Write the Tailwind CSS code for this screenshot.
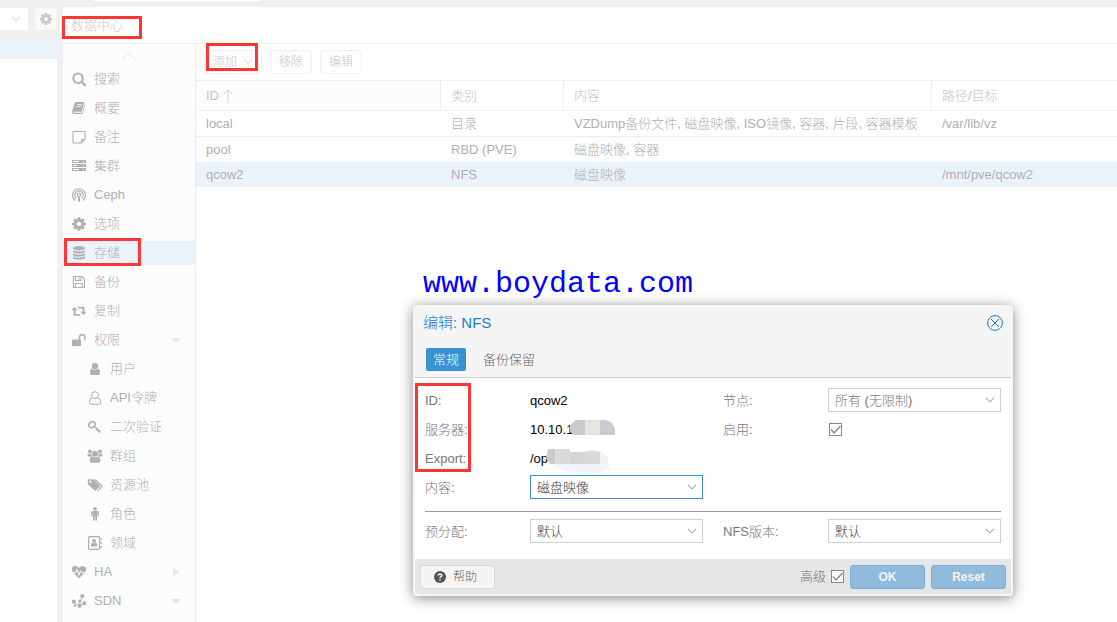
<!DOCTYPE html>
<html lang="zh-CN">
<head>
    <meta charset="UTF-8">
    <meta name="viewport" content="width=device-width, initial-scale=1.0">
    <title>数据中心 - 存储</title>
    <script src="https://cdn.jsdelivr.net/npm/@tailwindcss/browser@4"></script>
</head>
<body class="relative flex min-h-screen flex-col overflow-x-hidden bg-[#f0f0f0] font-['Liberation_Sans','Noto_Sans_CJK_SC',sans-serif] text-[13px] leading-5 font-light text-[#b0b0b0]">

    <!-- shared shapes -->
    <svg class="hidden">
        <symbol id="chevron" viewBox="0 0 10 6"><path d="M1 .8l4 4 4-4" fill="none" stroke="currentColor" stroke-width="1.1"/></symbol>
        <symbol id="cog" viewBox="0 0 1792 1792"><path fill="currentColor" d="M1152 896q0-106-75-181t-181-75-181 75-75 181 75 181 181 75 181-75 75-181zm512-109v222q0 12-8 23t-20 13l-185 28q-19 54-39 91 35 50 107 138 10 12 10 25t-9 23q-27 37-99 108t-94 71q-12 0-26-9l-138-108q-44 23-91 38-16 136-29 186-7 28-36 28h-222q-14 0-24.5-8.5t-11.5-21.5l-28-184q-49-16-90-37l-141 107q-10 9-25 9-14 0-25-11-126-114-165-168-7-10-7-23 0-12 8-23 15-21 51-66.5t54-70.5q-27-50-41-99l-183-27q-13-2-21-12.5t-8-23.5v-222q0-12 8-23t19-13l186-28q14-46 39-92-40-57-107-138-10-12-10-24 0-10 9-23 26-36 98.5-107.5t94.5-71.5q13 0 26 10l138 107q44-23 91-38 16-136 29-186 7-28 36-28h222q14 0 24.5 8.5t11.5 21.5l28 184q49 16 90 37l142-107q9-9 24-9 13 0 25 10 129 119 165 170 7 8 7 22 0 12-8 23-15 21-51 66.5t-54 70.5q26 50 41 98l183 28q13 2 21 12.5t8 23.5z"/></symbol>
    </svg>

    <div class="h-[7px] shrink-0 pl-[93px]"><div class="h-px w-[168px] bg-white"></div></div>

    <div class="flex grow">
        <!-- resource tree, mostly off to the left -->
        <aside class="flex w-[57px] shrink-0 flex-col">
            <div class="flex h-[30px] items-start justify-between pt-px">
                <button class="flex h-[22px] w-7 items-center justify-end bg-white pr-[7px] text-[#dddddd]" aria-label="视图">
                    <svg class="h-[6px] w-[10px]"><use href="#chevron"/></svg>
                </button>
                <button class="flex size-[22px] items-center justify-center rounded-sm bg-[#f9f9f9] text-[#c8c8c8]" aria-label="设置">
                    <svg class="size-[14px]"><use href="#cog"/></svg>
                </button>
            </div>
            <div class="h-[22px] bg-[#ebf3fa]"></div>
            <div class="grow bg-white"></div>
        </aside>

        <div class="ml-[6px] flex min-w-0 grow flex-col bg-white">
            <header class="relative flex h-[37px] items-center border-b border-[#eeeeee] pt-0.5 pl-2 text-[#cccccc]">
                <h1>数据中心</h1>
                <div class="absolute top-[9px] -left-px h-[23px] w-20 border-3 border-[#fc3535]"></div>
            </header>

            <div class="flex grow">
                <nav class="flex w-[133px] shrink-0 flex-col border-r border-[#eeeeee] bg-[#fcfcfc]">
                    <div class="flex h-[23px] justify-center pt-2 text-[#e8e8e8]">
                        <svg class="h-[9px] w-4" viewBox="0 0 16 9"><path d="M1 8l7-7 7 7" fill="none" stroke="currentColor"/></svg>
                    </div>
                    <ul class="flex flex-col gap-[5px]">
                        <li><a href="#" class="flex h-6 items-center gap-[7px] pl-2">
                            <svg class="size-4 shrink-0" viewBox="0 0 16 16" fill="none" stroke="currentColor"><circle cx="7" cy="7.3" r="4.7" stroke-width="2"/><path d="M10.7 11l3.2 3.2" stroke-width="2.4" stroke-linecap="round"/></svg>搜索</a></li>
                        <li><a href="#" class="flex h-6 items-center gap-[7px] pl-2">
                            <svg class="size-4 shrink-0" viewBox="0 0 16 16" fill="currentColor"><path d="M5.3 2h7.2q1 0 .7 1l-2.3 7.9q-.3.9-1.3.9H2.8q-.7 0-.6.5.2.5 1 .5h7.2q.7 0 1-.8L13.9 4q.7.5.4 1.3l-2.3 7.5q-.4 1.2-1.6 1.2H3q-1.5 0-2-1.5-.2-.7.1-1.3l2.5-7.8Q4 2 5.300 2z"/><path d="M6 4.600h5M5.400 6.600h5" stroke="#fcfcfc" stroke-width=".9"/></svg>概要</a></li>
                        <li><a href="#" class="flex h-6 items-center gap-[7px] pl-2">
                            <svg class="size-4 shrink-0" viewBox="0 0 16 16" fill="none" stroke="currentColor" stroke-width="1.1"><path d="M2 3q0-.5.5-.5h11q.5 0 .5.5v7.500l-3.500 3.500h-8q-.5 0-.5-.5zM10.500 14v-3q0-.5.5-.5h3"/></svg>备注</a></li>
                        <li><a href="#" class="flex h-6 items-center gap-[7px] pl-2">
                            <svg class="size-4 shrink-0" viewBox="0 0 16 16" fill="currentColor"><path d="M1 2h14v3H1zM1 6h14v3H1zM1 10h14v3H1z"/><path d="M2 3.500h6M2 7.500h4M2 11.500h6M12 3.500h1M12 7.500h1M12 11.500h1" stroke="#fcfcfc"/></svg>集群</a></li>
                        <li><a href="#" class="flex h-6 items-center gap-[7px] pl-2">
                            <svg class="size-4 shrink-0" viewBox="0 0 16 16" fill="none" stroke="currentColor" stroke-width="1.200"><path d="M4.200 13.500a6.500 6.500 0 1 1 7.600 0M5.300 11.300a4.200 4.200 0 1 1 5.400 0"/><circle cx="8" cy="7.800" r="1.700"/><path d="M8 10.200v4.300" stroke-width="2.200"/></svg>Ceph</a></li>
                        <li><a href="#" class="flex h-6 items-center gap-[7px] pl-2">
                            <svg class="size-4 shrink-0"><use href="#cog"/></svg>选项</a></li>
                        <li class="relative"><a href="#" class="flex h-6 items-center gap-[7px] bg-[#ebf3fa] pl-2">
                            <svg class="size-4 shrink-0" viewBox="0 0 16 16" fill="currentColor"><ellipse cx="8" cy="3.200" rx="6" ry="2.200"/><path d="M2 4.900q1.500 1.700 6 1.700t6-1.700v1.500q0 2-6 2t-6-2zM2 8q1.500 1.700 6 1.700T14 8v1.500q0 2-6 2t-6-2zM2 11.100q1.500 1.700 6 1.700t6-1.700v1.500q0 2-6 2t-6-2z"/></svg>存储</a>
                            <div class="absolute -top-[3px] left-px h-7 w-[77px] border-3 border-[#fc3535]"></div></li>
                        <li><a href="#" class="flex h-6 items-center gap-[7px] pl-2">
                            <svg class="size-4 shrink-0" viewBox="0 0 16 16" fill="none" stroke="currentColor" stroke-width="1.100"><path d="M2.500 2.500h8.500l2.500 2.500v8.500h-11zM4.500 13.500v-4h7v4M4.500 2.500v4h5.500v-4M8 3.500v2"/></svg>备份</a></li>
                        <li><a href="#" class="flex h-6 items-center gap-[7px] pl-2">
                            <svg class="size-4 shrink-0" viewBox="0 0 16 16" fill="currentColor"><path d="M3.500 3.800L.6 7.300h2v5q0 .5.500.5h6.800l-1.500-1.900H4.500V7.300h2zM12.500 12.200l2.900-3.500h-2v-4.500q0-.5-.5-.5H6.100l1.500 1.900h3.900v3.100h-2z"/></svg>复制</a></li>
                        <li><a href="#" class="flex h-6 items-center gap-[7px] pl-2">
                            <svg class="size-4 shrink-0" viewBox="0 0 16 16"><rect x="1" y="7.500" width="9" height="6.500" rx=".7" fill="currentColor"/><path d="M8.500 8V5.500a2.700 2.700 0 0 1 5.400 0V8" fill="none" stroke="currentColor" stroke-width="1.500"/></svg>权限
                            <svg class="mr-[14px] ml-auto h-[5px] w-[10px] text-[#e8e8e8]" viewBox="0 0 10 5" fill="currentColor"><path d="M0 0h10L5 5z"/></svg></a>
                            <ul class="mt-[5px] flex flex-col gap-[5px]">
                                <li><a href="#" class="flex h-6 items-center gap-[7px] pl-6">
                                    <svg class="size-4 shrink-0" viewBox="0 0 16 16" fill="currentColor"><circle cx="8" cy="5" r="3.100"/><path d="M5 7.500q3 2.500 6 0 2 .5 2 4.300 0 2.200-1.800 2.200H4.800Q3 14 3 11.800 3 8 5 7.500z"/></svg>用户</a></li>
                                <li><a href="#" class="flex h-6 items-center gap-[7px] pl-6">
                                    <svg class="size-4 shrink-0" viewBox="0 0 16 16" fill="none" stroke="currentColor"><circle cx="8" cy="5.200" r="3.500"/><path d="M5.300 7.800q-3 .8-3 4.500 0 2 1.900 2h7.600q1.900 0 1.900-2 0-3.700-3-4.500"/></svg>API令牌</a></li>
                                <li><a href="#" class="flex h-6 items-center gap-[7px] pl-6">
                                    <svg class="size-4 shrink-0" viewBox="0 0 16 16" fill="none" stroke="currentColor"><ellipse cx="5" cy="5.700" rx="3.400" ry="2.700" transform="rotate(-35 5 5.700)" stroke-width="1.600"/><path d="M7.500 7.500l5.800 5.800M9.300 11.500l2-2M11.300 13.300l2-2" stroke-width="1.400"/></svg>二次验证</a></li>
                                <li><a href="#" class="flex h-6 items-center gap-[7px] pl-6">
                                    <svg class="size-4 shrink-0" viewBox="0 0 16 16" fill="currentColor"><circle cx="3" cy="3.500" r="2"/><circle cx="13" cy="3.500" r="2"/><circle cx="8" cy="5.800" r="3"/><path d="M1 5.500q1.500 1 3.300.3-.1 1.700.9 2.700H2Q.5 8.500.5 7.300.500 6 1 5.500zM15 5.500q-1.500 1-3.300.3.100 1.700-.9 2.700H14q1.500 0 1.500-1.200 0-1.300-.500-1.800zM5 8.500q3 2 6 0 2.300.6 2.300 4.200 0 2-1.800 2h-7q-1.800 0-1.800-2 0-3.600 2.300-4.200z"/></svg>群组</a></li>
                                <li><a href="#" class="flex h-6 items-center gap-[7px] pl-6">
                                    <svg class="size-4 shrink-0" viewBox="0 0 16 16" fill="currentColor"><path fill-rule="evenodd" d="M.8 3q0-.8.800-.8h4q.800 0 1.400.6l5.700 5.700q.6.600 0 1.200l-3.900 3.900q-.6.600-1.200 0L1.700 8Q.8 7.200.8 6.300zM3.300 3.500a1.100 1.100 0 1 0 .01 0z"/><path d="M8 2.500l6.600 6.300q.6.600 0 1.200l-3.800 3.800" fill="none" stroke="currentColor" stroke-width="1.200"/></svg>资源池</a></li>
                                <li><a href="#" class="flex h-6 items-center gap-[7px] pl-6">
                                    <svg class="size-4 shrink-0" viewBox="0 0 16 16" fill="currentColor"><circle cx="8" cy="2.800" r="1.900"/><path d="M5.500 5h5q1.300 0 1.300 1.300v3.400q0 .7-.7.7t-.7-.7V7H10v7q0 .8-.8.800t-.8-.8v-3.500h-.8V14q0 .8-.8.800T6 14V7h-.4v2.700q0 .7-.7.7t-.7-.7V6.300Q4.200 5 5.500 5z"/></svg>角色</a></li>
                                <li><a href="#" class="flex h-6 items-center gap-[7px] pl-6">
                                    <svg class="size-4 shrink-0" viewBox="0 0 16 16"><rect x="1.600" y="1.600" width="11" height="12.800" rx=".8" fill="none" stroke="currentColor" stroke-width="1.200"/><path d="M14.200 3v2M14.200 7v2M14.200 11v2" stroke="currentColor" stroke-width="1.200"/><g fill="currentColor"><circle cx="7.100" cy="6.100" r="2"/><path d="M5.200 7.700q1.900 1.300 3.800 0 1.400.4 1.400 2.800 0 1-1 1H4.800q-1 0-1-1 0-2.400 1.400-2.800z"/></g></svg>领域</a></li>
                            </ul>
                        </li>
                        <li><a href="#" class="flex h-6 items-center gap-[7px] pl-2">
                            <svg class="size-4 shrink-0" viewBox="0 0 16 16"><path fill="currentColor" d="M8 14.200L2 8.300Q.8 6.900.8 5.500.8 2 4.400 2 6.300 2 8 4q1.700-2 3.600-2 3.600 0 3.600 3.500 0 1.400-1.200 2.800z"/><path d="M1 8.400h3.800l1.200-3 1.800 6 1.700-4.700.8 1.700H15" fill="none" stroke="#fcfcfc"/></svg>HA
                            <svg class="mr-4 ml-auto h-[10px] w-[6px] text-[#e8e8e8]" viewBox="0 0 6 10" fill="currentColor"><path d="M0 0v10l6-5z"/></svg></a></li>
                        <li><a href="#" class="flex h-6 items-center gap-[7px] pl-2">
                            <svg class="size-4 shrink-0" viewBox="0 0 16 16" fill="currentColor"><path d="M3 9l5 3.500 3.500-9.500M8 12.500l5-2" stroke="currentColor" fill="none"/><circle cx="2.900" cy="8.600" r="2.200"/><circle cx="11.300" cy="3" r="2"/><circle cx="8.600" cy="8" r="1.500"/><circle cx="13.300" cy="10.300" r="2"/><circle cx="8.600" cy="13" r="2"/><circle cx="4" cy="12.500" r="1.200"/></svg>SDN
                            <svg class="mr-[14px] ml-auto h-[5px] w-[10px] text-[#e8e8e8]" viewBox="0 0 10 5" fill="currentColor"><path d="M0 0h10L5 5z"/></svg></a></li>
                    </ul>
                </nav>

                <main class="min-w-0 grow">
                    <div class="relative flex h-9 items-center gap-2 pl-2 text-xs text-[#c8c8c8]">
                        <button class="flex h-6 w-[58px] items-center justify-between rounded-[3px] border border-[#f0f0f0] bg-[#fdfdfd] px-2">添加
                            <svg class="h-[6px] w-[10px] text-[#dddddd]"><use href="#chevron"/></svg></button>
                        <button class="h-6 w-[42px] rounded-[3px] border border-[#f0f0f0] bg-[#fdfdfd]">移除</button>
                        <button class="h-6 w-[42px] rounded-[3px] border border-[#f0f0f0] bg-[#fdfdfd]">编辑</button>
                        <div class="absolute -top-px left-[10px] h-7 w-[52px] border-3 border-[#fc3535]"></div>
                    </div>
                    <table class="w-full table-fixed border-separate border-spacing-0 text-left whitespace-nowrap">
                        <colgroup>
                            <col class="w-[245px]">
                            <col class="w-[123px]">
                            <col class="w-[368px]">
                            <col>
                        </colgroup>
                        <thead>
                            <tr class="h-[31px] text-[#c4c4c4]">
                                <th class="border-y border-r border-[#eeeeee] bg-[#fafcfe] px-[10px] font-light"><span class="flex items-center gap-1">ID
                                    <svg class="h-[14px] w-[10px] text-[#d4d4d4]" viewBox="0 0 10 14" fill="none" stroke="currentColor"><path d="M5 14V1M.8 5.200L5 1l4.200 4.200"/></svg></span></th>
                                <th class="border-y border-r border-[#eeeeee] px-[10px] font-light">类别</th>
                                <th class="border-y border-r border-[#eeeeee] px-[10px] font-light">内容</th>
                                <th class="border-y border-[#eeeeee] px-[10px] font-light">路径/目标</th>
                            </tr>
                        </thead>
                        <tbody>
                            <tr class="h-[26px]">
                                <td class="border-b border-[#eeeeee] px-[10px]">local</td>
                                <td class="border-b border-[#eeeeee] px-[10px]">目录</td>
                                <td class="border-b border-[#eeeeee] px-[10px]">VZDump备份文件, 磁盘映像, ISO镜像, 容器, 片段, 容器模板</td>
                                <td class="border-b border-[#eeeeee] px-[10px]">/var/lib/vz</td>
                            </tr>
                            <tr class="h-[25px] bg-[#fdfdfd]">
                                <td class="px-[10px]">pool</td>
                                <td class="px-[10px]">RBD (PVE)</td>
                                <td class="px-[10px]">磁盘映像, 容器</td>
                                <td></td>
                            </tr>
                            <tr class="h-[25px] bg-[#ebf3fa]">
                                <td class="px-[10px]">qcow2</td>
                                <td class="px-[10px]">NFS</td>
                                <td class="px-[10px]">磁盘映像</td>
                                <td class="px-[10px]">/mnt/pve/qcow2</td>
                            </tr>
                        </tbody>
                    </table>
                </main>
            </div>
        </div>
    </div>

    <div class="absolute top-[266px] left-[423px] font-['Liberation_Mono',monospace] text-[30px] leading-9 text-[#0000ff]">www.boydata.com</div>

    <!-- edit window -->
    <form class="absolute top-[305px] left-[413px] w-[600px] rounded border-2 border-[#f5f5f5] bg-white text-[#666666] shadow-[0_2px_14px_#888888]">
        <div class="flex h-8 items-center justify-between bg-[#f5f5f5] px-2 text-[15px] text-[#157fcc]">
            <h2>编辑: NFS</h2>
            <button type="button" aria-label="关闭">
                <svg class="size-4" viewBox="0 0 16 16" fill="none" stroke="currentColor"><circle cx="8" cy="8" r="7.400"/><path d="M4 4l8 8M12 4l-8 8"/></svg>
            </button>
        </div>
        <div class="flex h-[39px] items-center gap-[10px] border-b border-[#cfcfcf] bg-[#f5f5f5] pt-[3px] pl-[11px]">
            <button type="button" class="h-[23px] w-10 rounded-xs bg-[#3892d4] text-white">常规</button>
            <button type="button" class="h-[23px] px-[7px]">备份保留</button>
        </div>

        <div class="relative px-[10px] pt-[10px] pb-4">
            <div class="grid grid-cols-[105px_173px_20px_105px_173px] gap-y-[5px] text-[#777777]">
                <label for="sid" class="h-6 leading-[26px]">ID:</label>
                <input id="sid" class="h-6 w-full text-black outline-none" value="qcow2" readonly>
                <label for="nodes" class="col-start-4 h-6 leading-[26px]">节点:</label>
                <div class="relative">
                    <select id="nodes" class="block h-6 w-full appearance-none border border-[#cfcfcf] px-[6px] pt-0.5 text-[#777777]"><option>所有 (无限制)</option></select>
                    <svg class="pointer-events-none absolute top-[9px] right-[6px] h-[6px] w-[10px] text-[#aaaaaa]"><use href="#chevron"/></svg>
                </div>

                <label for="server" class="h-6 leading-[26px]">服务器:</label>
                <div class="relative">
                    <input id="server" class="h-6 w-full text-black outline-none" value="10.10.1" readonly>
                    <svg class="absolute top-[3px] left-10 h-[15px] w-[45px]" viewBox="0 0 45 15"><path fill="#cbcac9" d="M6 0h9v15H3L0 11V5z"/><path fill="#dcdcda" d="M15 0h15v15H15z"/><path fill="#cccad0" d="M30 0h5q6 1 8 5l2 4v6H30z"/><path fill="#e5e5e1" d="M15 1h15v13H15z"/></svg>
                </div>
                <label for="enable" class="col-start-4 h-6 leading-[26px]">启用:</label>
                <div class="relative flex items-center pl-px">
                    <input id="enable" type="checkbox" class="peer size-[13px] appearance-none border border-[#888888] bg-white" checked>
                    <svg class="pointer-events-none absolute left-px hidden size-[13px] text-[#888888] peer-checked:block" viewBox="0 0 13 13"><path d="M2 6.500l3 3.500 6.500-7" fill="none" stroke="currentColor" stroke-width="1.400"/></svg>
                </div>

                <label for="export" class="h-6 leading-[26px]">Export:</label>
                <div class="relative">
                    <input id="export" class="h-6 w-full text-black outline-none" value="/op" readonly>
                    <svg class="absolute top-[3px] left-4 h-6 w-16" viewBox="0 0 64 24"><path fill="#f0f5fd" d="M8 15h55q1 4-4 7-7 3-15 2l-24-2q-8-2-12-7z"/><path fill="#cccaca" d="M2 0h7v15H4L0 9z"/><path fill="#dddad9" d="M9 0h15v15H9z"/><path fill="#d5d5d5" d="M24 3h15v12H24z"/><path fill="#d9d9d9" d="M39 3q8-3 15 0v12H39z"/><path fill="#f1f2f4" d="M54 2q8 3 9 13h-9z"/></svg>
                </div>

                <label for="content" class="col-start-1 h-6 leading-[26px]">内容:</label>
                <div class="relative">
                    <select id="content" class="block h-6 w-full appearance-none border border-[#3892d4] px-[6px] pt-0.5 text-[#404040]"><option>磁盘映像</option></select>
                    <svg class="pointer-events-none absolute top-[9px] right-[6px] h-[6px] w-[10px] text-[#aaaaaa]"><use href="#chevron"/></svg>
                </div>
            </div>
            <hr class="mt-3 mb-[7px] border-[#999999]">
            <div class="grid grid-cols-[105px_173px_20px_105px_173px] text-[#777777]">
                <label for="prealloc" class="h-6 leading-[26px]">预分配:</label>
                <div class="relative">
                    <select id="prealloc" class="block h-6 w-full appearance-none border border-[#cfcfcf] px-[6px] pt-0.5 text-[#404040]"><option>默认</option></select>
                    <svg class="pointer-events-none absolute top-[9px] right-[6px] h-[6px] w-[10px] text-[#aaaaaa]"><use href="#chevron"/></svg>
                </div>
                <label for="version" class="col-start-4 h-6 leading-[26px]">NFS版本:</label>
                <div class="relative">
                    <select id="version" class="block h-6 w-full appearance-none border border-[#cfcfcf] px-[6px] pt-0.5 text-[#404040]"><option>默认</option></select>
                    <svg class="pointer-events-none absolute top-[9px] right-[6px] h-[6px] w-[10px] text-[#aaaaaa]"><use href="#chevron"/></svg>
                </div>
            </div>
            <div class="absolute top-[5px] left-0 h-[89px] w-14 border-3 border-[#fc3535]"></div>
        </div>

        <div class="flex h-[35px] items-center gap-[6px] bg-[#e6e6e6] px-[5px] pt-px text-xs">
            <button type="button" class="flex h-6 w-[75px] items-center justify-center gap-[7px] rounded-[3px] border border-[#d8d8d8] bg-[#f5f5f5] pr-1">
                <svg class="size-3" viewBox="0 0 12 12"><circle cx="6" cy="6" r="6" fill="#555555"/><path d="M4.200 4.500q.2-1.500 1.900-1.500 1.700.1 1.700 1.500 0 .9-1.100 1.400-.7.300-.7 1.100M6 8.200v1.400" fill="none" stroke="#f5f5f5" stroke-width="1.500"/></svg>帮助</button>
            <div class="relative ml-auto flex items-center gap-[5px]">
                <label for="advanced" class="text-[13px] text-[#777777]">高级</label>
                <input id="advanced" type="checkbox" class="peer size-[13px] appearance-none border border-[#888888] bg-white" checked>
                <svg class="pointer-events-none absolute right-0 hidden size-[13px] text-[#888888] peer-checked:block" viewBox="0 0 13 13"><path d="M2 6.500l3 3.500 6.500-7" fill="none" stroke="currentColor" stroke-width="1.400"/></svg>
            </div>
            <button type="button" class="h-6 w-[75px] rounded-[3px] border border-[#74b0de] bg-[#91bbdd] font-bold text-[#f0f4f8]">OK</button>
            <button type="button" class="h-6 w-[75px] rounded-[3px] border border-[#74b0de] bg-[#91bbdd] font-bold text-[#f0f4f8]">Reset</button>
        </div>
    </form>
</body>
</html>
